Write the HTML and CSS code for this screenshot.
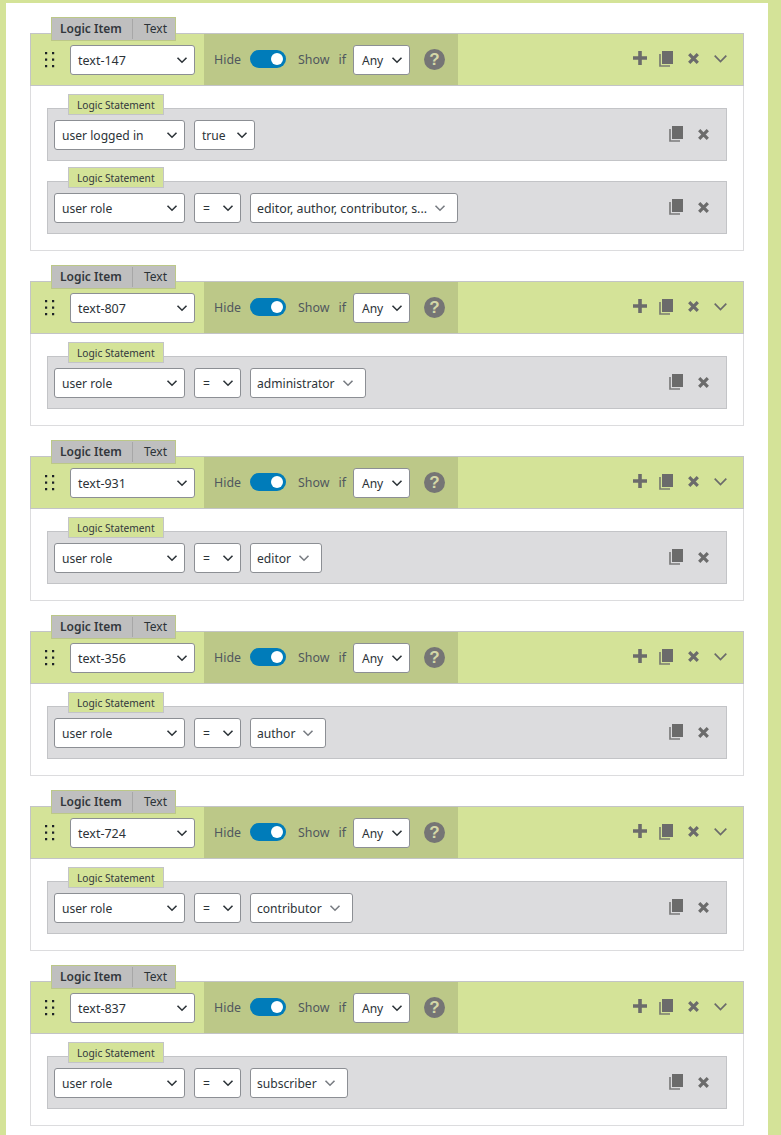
FILE: index.html
```html
<!DOCTYPE html>
<html lang="en">
<head>
    <meta charset="UTF-8">
    <title>Logic Items</title>
    <link rel="stylesheet" href="styles.css">
</head>
<body>
    <svg class="sprites" width="0" height="0">
        <symbol id="chev" viewBox="0 0 12 12"><path d="M1.500 3.800 6 8.200l4.500-4.400" fill="none" stroke="currentColor" stroke-width="1.600"/></symbol>
        <symbol id="chev-lg" viewBox="0 0 13 8"><path d="M.7.700 6.500 6.500 12.300.7" fill="none" stroke="currentColor" stroke-width="1.700"/></symbol>
        <symbol id="plus" viewBox="0 0 14 14"><path d="M5.200 0h3.600v5.200H14v3.600H8.800V14H5.200V8.800H0V5.200h5.200z" fill="currentColor"/></symbol>
        <symbol id="copy" viewBox="0 0 14 16"><path d="M3 0h11v13H3z" fill="currentColor"/><path d="M1 3v12h10" fill="none" stroke="currentColor" stroke-width="1.700" opacity=".85"/></symbol>
        <symbol id="cross" viewBox="0 0 11 11"><path d="M1.200 1.200l8.600 8.600m0-8.600l-8.600 8.600" fill="none" stroke="currentColor" stroke-width="3.200"/></symbol>
        <symbol id="grip" viewBox="0 0 10 16"><path d="M0 0h2.200v2.200H0zM7 0h2.200v2.200H7zM0 6.500h2.200v2.200H0zM7 6.500h2.200v2.200H7zM0 13h2.200v2.200H0zM7 13h2.200v2.200H7z" fill="#1d2327"/></symbol>
    </svg>

    <div class="panel">
        <div class="item">
            <div class="item-tab"><b>Logic Item</b><span>Text</span></div>
            <div class="item-head">
                <svg class="grip"><use href="#grip"/></svg>
                <div class="sel sel-field">text-147<svg class="chev"><use href="#chev"/></svg></div>
                <div class="rule">
                    <span>Hide</span><i class="toggle"></i><span>Show</span><span class="rule-if">if</span>
                    <div class="sel sel-any">Any<svg class="chev"><use href="#chev"/></svg></div>
                    <i class="help">?</i>
                </div>
                <div class="actions">
                    <svg class="ic-plus"><use href="#plus"/></svg>
                    <svg class="ic-copy"><use href="#copy"/></svg>
                    <svg class="ic-cross"><use href="#cross"/></svg>
                    <svg class="ic-chev"><use href="#chev-lg"/></svg>
                </div>
            </div>
            <div class="item-body">
                <div class="stmt">
                    <div class="stmt-tab">Logic Statement</div>
                    <div class="sel sel-type">user logged in<svg class="chev"><use href="#chev"/></svg></div>
                    <div class="sel sel-bool">true<svg class="chev"><use href="#chev"/></svg></div>
                    <div class="stmt-actions"><svg class="ic-copy"><use href="#copy"/></svg><svg class="ic-cross"><use href="#cross"/></svg></div>
                </div>
                <div class="stmt">
                    <div class="stmt-tab">Logic Statement</div>
                    <div class="sel sel-type">user role<svg class="chev"><use href="#chev"/></svg></div>
                    <div class="sel sel-op">=<svg class="chev"><use href="#chev"/></svg></div>
                    <div class="sel sel-multi sel-long">editor, author, contributor, s...<svg class="chev"><use href="#chev"/></svg></div>
                    <div class="stmt-actions"><svg class="ic-copy"><use href="#copy"/></svg><svg class="ic-cross"><use href="#cross"/></svg></div>
                </div>
            </div>
        </div>

        <div class="item">
            <div class="item-tab"><b>Logic Item</b><span>Text</span></div>
            <div class="item-head">
                <svg class="grip"><use href="#grip"/></svg>
                <div class="sel sel-field">text-807<svg class="chev"><use href="#chev"/></svg></div>
                <div class="rule">
                    <span>Hide</span><i class="toggle"></i><span>Show</span><span class="rule-if">if</span>
                    <div class="sel sel-any">Any<svg class="chev"><use href="#chev"/></svg></div>
                    <i class="help">?</i>
                </div>
                <div class="actions">
                    <svg class="ic-plus"><use href="#plus"/></svg>
                    <svg class="ic-copy"><use href="#copy"/></svg>
                    <svg class="ic-cross"><use href="#cross"/></svg>
                    <svg class="ic-chev"><use href="#chev-lg"/></svg>
                </div>
            </div>
            <div class="item-body">
                <div class="stmt">
                    <div class="stmt-tab">Logic Statement</div>
                    <div class="sel sel-type">user role<svg class="chev"><use href="#chev"/></svg></div>
                    <div class="sel sel-op">=<svg class="chev"><use href="#chev"/></svg></div>
                    <div class="sel sel-multi">administrator<svg class="chev"><use href="#chev"/></svg></div>
                    <div class="stmt-actions"><svg class="ic-copy"><use href="#copy"/></svg><svg class="ic-cross"><use href="#cross"/></svg></div>
                </div>
            </div>
        </div>

        <div class="item">
            <div class="item-tab"><b>Logic Item</b><span>Text</span></div>
            <div class="item-head">
                <svg class="grip"><use href="#grip"/></svg>
                <div class="sel sel-field">text-931<svg class="chev"><use href="#chev"/></svg></div>
                <div class="rule">
                    <span>Hide</span><i class="toggle"></i><span>Show</span><span class="rule-if">if</span>
                    <div class="sel sel-any">Any<svg class="chev"><use href="#chev"/></svg></div>
                    <i class="help">?</i>
                </div>
                <div class="actions">
                    <svg class="ic-plus"><use href="#plus"/></svg>
                    <svg class="ic-copy"><use href="#copy"/></svg>
                    <svg class="ic-cross"><use href="#cross"/></svg>
                    <svg class="ic-chev"><use href="#chev-lg"/></svg>
                </div>
            </div>
            <div class="item-body">
                <div class="stmt">
                    <div class="stmt-tab">Logic Statement</div>
                    <div class="sel sel-type">user role<svg class="chev"><use href="#chev"/></svg></div>
                    <div class="sel sel-op">=<svg class="chev"><use href="#chev"/></svg></div>
                    <div class="sel sel-multi">editor<svg class="chev"><use href="#chev"/></svg></div>
                    <div class="stmt-actions"><svg class="ic-copy"><use href="#copy"/></svg><svg class="ic-cross"><use href="#cross"/></svg></div>
                </div>
            </div>
        </div>

        <div class="item">
            <div class="item-tab"><b>Logic Item</b><span>Text</span></div>
            <div class="item-head">
                <svg class="grip"><use href="#grip"/></svg>
                <div class="sel sel-field">text-356<svg class="chev"><use href="#chev"/></svg></div>
                <div class="rule">
                    <span>Hide</span><i class="toggle"></i><span>Show</span><span class="rule-if">if</span>
                    <div class="sel sel-any">Any<svg class="chev"><use href="#chev"/></svg></div>
                    <i class="help">?</i>
                </div>
                <div class="actions">
                    <svg class="ic-plus"><use href="#plus"/></svg>
                    <svg class="ic-copy"><use href="#copy"/></svg>
                    <svg class="ic-cross"><use href="#cross"/></svg>
                    <svg class="ic-chev"><use href="#chev-lg"/></svg>
                </div>
            </div>
            <div class="item-body">
                <div class="stmt">
                    <div class="stmt-tab">Logic Statement</div>
                    <div class="sel sel-type">user role<svg class="chev"><use href="#chev"/></svg></div>
                    <div class="sel sel-op">=<svg class="chev"><use href="#chev"/></svg></div>
                    <div class="sel sel-multi">author<svg class="chev"><use href="#chev"/></svg></div>
                    <div class="stmt-actions"><svg class="ic-copy"><use href="#copy"/></svg><svg class="ic-cross"><use href="#cross"/></svg></div>
                </div>
            </div>
        </div>

        <div class="item">
            <div class="item-tab"><b>Logic Item</b><span>Text</span></div>
            <div class="item-head">
                <svg class="grip"><use href="#grip"/></svg>
                <div class="sel sel-field">text-724<svg class="chev"><use href="#chev"/></svg></div>
                <div class="rule">
                    <span>Hide</span><i class="toggle"></i><span>Show</span><span class="rule-if">if</span>
                    <div class="sel sel-any">Any<svg class="chev"><use href="#chev"/></svg></div>
                    <i class="help">?</i>
                </div>
                <div class="actions">
                    <svg class="ic-plus"><use href="#plus"/></svg>
                    <svg class="ic-copy"><use href="#copy"/></svg>
                    <svg class="ic-cross"><use href="#cross"/></svg>
                    <svg class="ic-chev"><use href="#chev-lg"/></svg>
                </div>
            </div>
            <div class="item-body">
                <div class="stmt">
                    <div class="stmt-tab">Logic Statement</div>
                    <div class="sel sel-type">user role<svg class="chev"><use href="#chev"/></svg></div>
                    <div class="sel sel-op">=<svg class="chev"><use href="#chev"/></svg></div>
                    <div class="sel sel-multi">contributor<svg class="chev"><use href="#chev"/></svg></div>
                    <div class="stmt-actions"><svg class="ic-copy"><use href="#copy"/></svg><svg class="ic-cross"><use href="#cross"/></svg></div>
                </div>
            </div>
        </div>

        <div class="item">
            <div class="item-tab"><b>Logic Item</b><span>Text</span></div>
            <div class="item-head">
                <svg class="grip"><use href="#grip"/></svg>
                <div class="sel sel-field">text-837<svg class="chev"><use href="#chev"/></svg></div>
                <div class="rule">
                    <span>Hide</span><i class="toggle"></i><span>Show</span><span class="rule-if">if</span>
                    <div class="sel sel-any">Any<svg class="chev"><use href="#chev"/></svg></div>
                    <i class="help">?</i>
                </div>
                <div class="actions">
                    <svg class="ic-plus"><use href="#plus"/></svg>
                    <svg class="ic-copy"><use href="#copy"/></svg>
                    <svg class="ic-cross"><use href="#cross"/></svg>
                    <svg class="ic-chev"><use href="#chev-lg"/></svg>
                </div>
            </div>
            <div class="item-body">
                <div class="stmt">
                    <div class="stmt-tab">Logic Statement</div>
                    <div class="sel sel-type">user role<svg class="chev"><use href="#chev"/></svg></div>
                    <div class="sel sel-op">=<svg class="chev"><use href="#chev"/></svg></div>
                    <div class="sel sel-multi">subscriber<svg class="chev"><use href="#chev"/></svg></div>
                    <div class="stmt-actions"><svg class="ic-copy"><use href="#copy"/></svg><svg class="ic-cross"><use href="#cross"/></svg></div>
                </div>
            </div>
        </div>
    </div>
</body>
</html>
```

FILE: styles.css
```css
* {
    box-sizing: border-box;
}

body {
    margin: 0;
    height: 1135px;
    overflow: hidden;
    padding: 3px 13px 0 6px;
    background-color: #d4e398;
    font-family: "Noto Sans", sans-serif;
    font-size: 12.400px;
    color: #2c3338;
}

.sprites {
    position: absolute;
}

.panel {
    height: 100%;
    padding: 30px 24px 0;
    background-color: #fff;
}

.item {
    position: relative;
    margin-bottom: 30px;
}

/* tabs sitting over the top edges */
.item-tab {
    position: absolute;
    left: 21px;
    top: -16px;
    z-index: 2;
    display: flex;
    align-items: center;
    height: 24px;
    padding: 0 8px;
    background-color: #bfbfbf;
    border: 1px solid #bcc888;
    line-height: 20px;
}

.item-tab b {
    width: 73px;
    font-size: 12px;
    font-weight: 600;
    color: #32373c;
    border-right: 1px solid #a7a7a7;
}

.item-tab span {
    padding-left: 11px;
    font-size: 12px;
}

.item-head {
    display: flex;
    align-items: stretch;
    height: 53px;
    background-color: #d4e398;
    border: 1px solid #c3c4c7;
}

.grip {
    width: 10px;
    height: 16px;
    margin: 18px 15px 0 14px;
}

.sel {
    display: flex;
    align-items: center;
    justify-content: space-between;
    height: 30px;
    background-color: #fff;
    border: 1px solid #8c8f94;
    border-radius: 3px;
    font-size: 12.100px;
    color: #2c3338;
    white-space: nowrap;
}

.chev {
    width: 12px;
    height: 12px;
    color: #2c3338;
}

.sel-field {
    width: 125px;
    margin: 11px 9px 0 0;
    padding: 0 6px 0 7px;
    font-size: 12.500px;
}

.rule {
    display: flex;
    align-items: center;
    width: 254px;
    padding: 0 0 1px 10px;
    background-color: #bcc888;
    color: #50575e;
}

.toggle {
    position: relative;
    width: 36px;
    height: 18px;
    margin: 0 12px 0 9px;
    border-radius: 9px;
    background-color: #007cba;
}

.toggle::after {
    content: "";
    position: absolute;
    right: 3px;
    top: 3px;
    width: 12px;
    height: 12px;
    border-radius: 50%;
    background-color: #fff;
}

.rule-if {
    margin: 0 7px 0 9px;
}

.sel-any {
    width: 57px;
    margin-top: 2px;
    padding: 0 6px 0 8px;
}

.help {
    width: 21px;
    height: 21px;
    margin-left: 14px;
    border-radius: 50%;
    background-color: #757575;
    color: #d4d8a8;
    font: normal 700 17px/21px "Liberation Sans", sans-serif;
    text-align: center;
}

.actions {
    display: flex;
    align-items: center;
    margin-left: auto;
    padding-right: 16px;
    color: #6b6b6b;
}

.ic-plus {
    width: 14px;
    height: 14px;
    margin: 0 12px 3px 0;
}

.ic-copy {
    width: 14px;
    height: 16px;
    margin-bottom: 1px;
}

.ic-cross {
    width: 11px;
    height: 11px;
    margin-left: 15px;
}

.actions .ic-cross {
    margin-bottom: 2px;
}

.ic-chev {
    width: 13px;
    height: 8px;
    margin: 0 0 1px 15px;
}

.item-body {
    padding: 22px 16px 16px;
    background-color: #fff;
    border: 1px solid #dcdcde;
    border-top: 0;
}

.stmt {
    position: relative;
    display: flex;
    align-items: center;
    gap: 9px;
    height: 53px;
    margin-bottom: 20px;
    padding: 0 6px;
    background-color: #dcdcde;
    border: 1px solid #c3c4c7;
}

.stmt:last-child {
    margin-bottom: 0;
}

.stmt-tab {
    position: absolute;
    left: 20px;
    top: -15px;
    height: 21px;
    padding: 1px 8px 0;
    background-color: #d4e398;
    border: 1px solid #c3c4c7;
    font-size: 10.200px;
    line-height: 18px;
    color: #32373c;
}

.sel-type {
    width: 131px;
    padding: 0 6px 0 7px;
}

.sel-bool {
    width: 61px;
    padding: 0 6px 0 7px;
}

.sel-op {
    width: 47px;
    padding: 0 6px 0 8px;
}

.sel-multi {
    gap: 7px;
    padding: 0 11px 0 6px;
}

.sel-long {
    font-size: 12.400px;
}

.sel-multi .chev {
    color: #787c82;
}

.stmt .sel {
    padding-top: 1px;
}

.stmt-actions {
    display: flex;
    align-items: center;
    margin-left: auto;
    padding-right: 11px;
    color: #6b6b6b;
}
```
